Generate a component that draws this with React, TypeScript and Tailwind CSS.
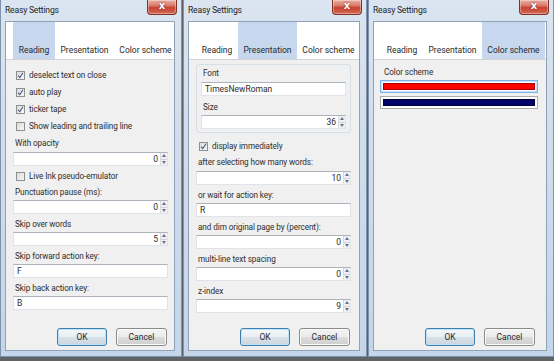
import React from "react";

const F = "font-['Roboto',sans-serif]";
const TXT = "text-[8.2px] tracking-[-0.1px] leading-[11px] text-[#2e2e2e] whitespace-nowrap";

function Close() {
  return (
    <div className="w-[30px] h-[15px] rounded-b-[4px] border border-t-0 border-[#7d3228] bg-[linear-gradient(180deg,#eab0a4_0%,#d97a6a_40%,#c8412f_55%,#d26a55_100%)] flex items-center justify-center shadow-[inset_0_0_0_1px_rgba(255,255,255,0.35)]">
      <span className="text-white text-[10px] font-bold leading-none font-['DejaVu_Sans',sans-serif] mt-[-2px] [text-shadow:0_0_2px_#6a1a10]">x</span>
    </div>
  );
}

function Tabs({ active }: { active: number }) {
  const tabs = [
    { t: "Reading", w: "w-[42px]" },
    { t: "Presentation", w: "w-[59px]" },
    { t: "Color scheme", w: "w-[63px]" },
  ];
  return (
    <div className="h-[38px] shrink-0 bg-white border-b border-[#cfd3d8] flex pl-[7px]">
      {tabs.map((x, i) => (
        <div
          key={x.t}
          className={`${x.w} shrink-0 flex items-end justify-center pb-[3px] ${i === active ? "bg-[#c6d7ee]" : ""}`}
        >
          <span className="text-[8.5px] leading-[11px] text-[#2a2a2a] whitespace-nowrap">{x.t}</span>
        </div>
      ))}
    </div>
  );
}

function Buttons({ pr }: { pr: string }) {
  return (
    <div className={`flex justify-end gap-[9px] ${pr} mb-[4px] shrink-0`}>
      <div className="w-[50px] h-[18px] rounded-[3px] border border-[#3c7fb1] bg-[linear-gradient(180deg,#f4f7fa_0%,#e9eef2_50%,#d9e1e8_51%,#cdd6de_100%)] shadow-[inset_0_0_0_1px_#bfe3f8] flex items-center justify-center">
        <span className="text-[8.5px] text-[#2a2a2a]">OK</span>
      </div>
      <div className="w-[51px] h-[18px] rounded-[3px] border border-[#8a8a8a] bg-[linear-gradient(180deg,#f3f3f3_0%,#ebebeb_50%,#dddddd_51%,#cfcfcf_100%)] shadow-[inset_0_0_0_1px_#fbfbfb] flex items-center justify-center">
        <span className="text-[8.5px] text-[#2a2a2a]">Cancel</span>
      </div>
    </div>
  );
}

function Window({ w, active, pr, children }: { w: string; active: number; pr: string; children: React.ReactNode }) {
  return (
    <div className={`${w} h-[357px] shrink-0 flex flex-col border-x border-b border-[#7f92aa] bg-[linear-gradient(180deg,#dbe5f1_0%,#d0ddec_40%,#c4d6ea_100%)]`}>
      <div className="h-[21px] shrink-0 flex items-start justify-between pl-[4px] pr-[4px]">
        <span className="mt-[5px] text-[8.6px] tracking-[-0.2px] leading-[11px] text-[#1e1e1e] whitespace-nowrap">Reasy Settings</span>
        <Close />
      </div>
      <div className="flex-1 flex flex-col ml-[4px] mr-[6px] mb-[5px] border border-[#8fa1b7] bg-[#f0f0f0] overflow-hidden">
        <Tabs active={active} />
        <div className="flex-1 flex flex-col">{children}</div>
        <Buttons pr={pr} />
      </div>
    </div>
  );
}

function Check({ on }: { on: boolean }) {
  return (
    <div className="w-[9px] h-[9px] shrink-0 border border-[#8e8f8f] bg-[linear-gradient(135deg,#dcdcdc,#f6f6f6)] flex items-center justify-center">
      {on && (
        <svg width="7" height="7" viewBox="0 0 7 7">
          <path d="M1 3.6 L2.8 5.6 L6 0.8" stroke="#4a5d86" strokeWidth="1.1" fill="none" />
        </svg>
      )}
    </div>
  );
}

function CheckRow({ on, label, h = "h-[17px]", extra = "" }: { on: boolean; label: string; h?: string; extra?: string }) {
  return (
    <div className={`${h} ${extra} flex items-center pl-[3px] gap-[4px]`}>
      <Check on={on} />
      <span className={TXT}>{label}</span>
    </div>
  );
}

function Label({ t, extra = "", h = "h-[16px]" }: { t: string; extra?: string; h?: string }) {
  return (
    <div className={`${h} ${extra} flex items-center pl-[2px]`}>
      <span className={TXT}>{t}</span>
    </div>
  );
}

function Spin() {
  return (
    <div className="w-[7px] h-full flex flex-col shrink-0 border-l border-[#d8dce2]">
      <div className="flex-1 bg-[#eef0f3] border-b border-[#cfd3d9] flex items-center justify-center">
        <svg width="4" height="3" viewBox="0 0 4 3"><path d="M0 3 L2 0 L4 3Z" fill="#6a7380" /></svg>
      </div>
      <div className="flex-1 bg-[#eef0f3] flex items-center justify-center">
        <svg width="4" height="3" viewBox="0 0 4 3"><path d="M0 0 L2 3 L4 0Z" fill="#6a7380" /></svg>
      </div>
    </div>
  );
}

function Num({ v, extra = "" }: { v: string; extra?: string }) {
  return (
    <div className={`h-[14px] ${extra} flex bg-white border border-[#e0e4ea] border-t-[#adb2bb]`}>
      <div className="flex-1 flex items-center justify-end pr-[2px]">
        <span className="text-[8.5px] leading-[10px] text-[#2a2a2a]">{v}</span>
      </div>
      <Spin />
    </div>
  );
}

function Text({ v, extra = "" }: { v: string; extra?: string }) {
  return (
    <div className={`h-[14px] ${extra} flex items-center pl-[3px] bg-white border border-[#e0e4ea] border-t-[#adb2bb]`}>
      <span className="text-[8.5px] leading-[10px] text-[#2a2a2a]">{v}</span>
    </div>
  );
}

export default function App() {
  return (
    <div className={`w-[554px] h-[361px] bg-[#5f6368] flex gap-[1px] overflow-hidden ${F}`}>
      <Window w="w-[182px]" active={0} pr="pr-[7px]">
        <div className="flex flex-col pl-[7px] pr-[6px] pt-[7px]">
          <CheckRow on label="deselect text on close" />
          <CheckRow on label="auto play" />
          <CheckRow on label="ticker tape" />
          <CheckRow on={false} label="Show leading and trailing line" />
          <Label t="With opacity" />
          <Num v="0" extra="mt-[1px]" />
          <CheckRow on={false} label="Live Ink pseudo-emulator" h="h-[16px]" extra="mt-[2px]" />
          <Label t="Punctuation pause (ms):" />
          <Num v="0" />
          <Label t="Skip over words" extra="mt-[2px]" />
          <Num v="5" />
          <Label t="Skip forward action key:" extra="mt-[2px]" />
          <Text v="F" />
          <Label t="Skip back action key:" extra="mt-[2px]" />
          <Text v="B" />
        </div>
      </Window>
      <Window w="w-[184px]" active={1} pr="pr-[9px]">
        <div className="flex flex-col pl-[7px] pr-[8px] pt-[4px]">
          <div className="flex flex-col border border-[#d5dfe5] rounded-[3px] px-[4px] pb-[3px]">
            <Label t="Font" h="h-[17px]" extra="pl-[0px]" />
            <Text v="TimesNewRoman" />
            <Label t="Size" extra="mt-[3px]" />
            <Num v="36" />
          </div>
          <CheckRow on label="display immediately" h="h-[16px]" extra="mt-[5px]" />
          <Label t="after selecting how many words:" h="h-[17px]" />
          <Num v="10" />
          <Label t="or wait for action key:" extra="mt-[2px]" />
          <Text v="R" />
          <Label t="and dim original page by (percent):" extra="mt-[2px]" />
          <Num v="0" />
          <Label t="multi-line text spacing" extra="mt-[2px]" />
          <Num v="0" />
          <Label t="z-index" extra="mt-[2px]" />
          <Num v="9" />
        </div>
      </Window>
      <Window w="w-[186px]" active={2} pr="pr-[11px]">
        <div className="flex flex-col pl-[6px] pr-[8px] pt-[4px]">
          <div className="h-[16px] flex items-center pl-[4px]">
            <span className={TXT}>Color scheme</span>
          </div>
          <div className="h-[13px] border border-[#7eb4ea] bg-white p-[2px] shadow-[inset_0_0_0_1px_#c9e3f8]">
            <div className="w-full h-full bg-[#ff0000] border border-[#b00000]" />
          </div>
          <div className="h-[13px] mt-[3px] border border-[#acacac] bg-white p-[2px]">
            <div className="w-full h-full bg-[#000066] border border-[#00003a]" />
          </div>
        </div>
      </Window>
    </div>
  );
}
